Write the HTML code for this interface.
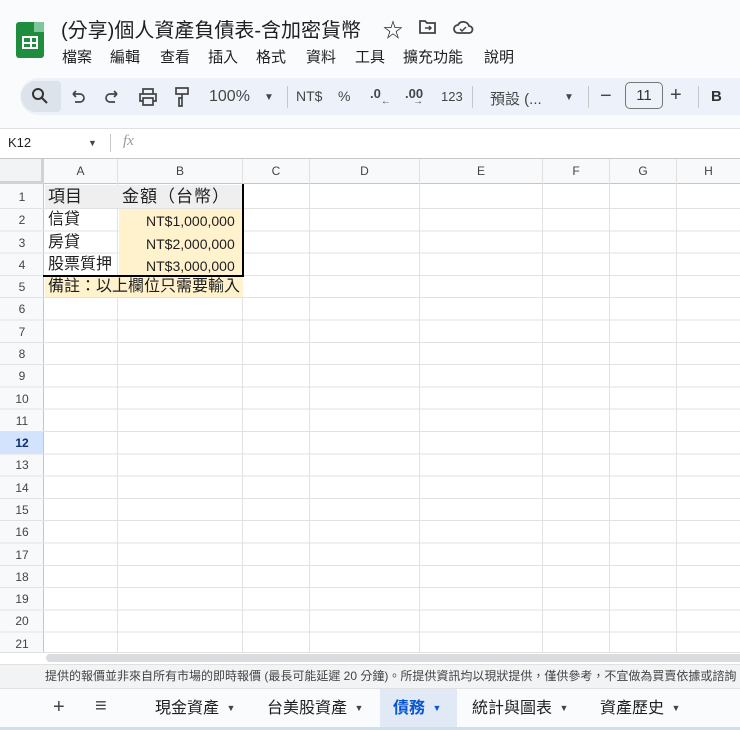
<!DOCTYPE html>
<html><head><meta charset="utf-8">
<style>
*{margin:0;padding:0;box-sizing:border-box}
body{width:740px;height:730px;overflow:hidden;background:#f9fbfd;font-family:"Liberation Sans","Noto Sans CJK TC",sans-serif;position:relative;color:#1f1f1f}
.a{position:absolute}
.menu span{position:absolute;top:0;white-space:nowrap}
.tb{position:absolute;top:78px;height:37px;left:20px;right:0;background:#edf2fa;border-radius:20px 0 0 20px}
.ti{position:absolute;top:87px;font-size:15px;color:#444746}
.sep{position:absolute;top:86px;width:1px;height:22px;background:#c7c7c7}
.rn{position:absolute;left:0;width:44px;text-align:center;font-size:12px;color:#444;}
.ch{position:absolute;top:159px;height:25px;line-height:25px;text-align:center;font-size:12px;color:#444;border-right:1px solid #e1e1e1}
.c{position:absolute;font-size:15px;line-height:22px;white-space:nowrap}
.ar{font-size:9px;margin-left:3px;color:#444;position:relative;top:-2px}
.tab{position:absolute;top:698px;font-size:16px;line-height:22px}
</style></head><body>
<div class="a" style="left:16px;top:22px;width:28px;height:36px;background:#1e8e3e;border-radius:3px"></div>
<div class="a" style="left:34px;top:22px;width:10px;height:10px;background:#7dc79a"></div>
<div class="a" style="left:22px;top:36px;width:16px;height:13px;border:2px solid #fff;background:linear-gradient(#fff,#fff) 6px 0/2px 100% no-repeat,linear-gradient(#fff,#fff) 0 4px/100% 2px no-repeat"></div>
<div class="a" style="left:61px;top:14px;font-size:20px;color:#1f1f1f">(分享)個人資產負債表-含加密貨幣</div>
<div class="a" style="left:383px;top:14px;font-size:20px">☆</div>
<svg class="a" style="left:418px;top:18px" width="20" height="18" viewBox="0 0 20 18"><path d="M2 3h5l2 2h8v10H2z" fill="none" stroke="#444" stroke-width="1.8"/><path d="M7 10h6M11 8l2 2-2 2" fill="none" stroke="#444" stroke-width="1.5"/></svg>
<svg class="a" style="left:452px;top:18px" width="22" height="18" viewBox="0 0 22 18"><path d="M6 15a4 4 0 0 1 0-8 6 6 0 0 1 11 1 3.5 3.5 0 0 1 0 7z" fill="none" stroke="#444" stroke-width="1.8"/><path d="M8 11l2 2 4-4" fill="none" stroke="#444" stroke-width="1.5"/></svg>
<div class="a menu" style="left:0;top:46px;font-size:15px;color:#1f1f1f"><span style="left:62px">檔案</span><span style="left:110px">編輯</span><span style="left:160px">查看</span><span style="left:208px">插入</span><span style="left:256px">格式</span><span style="left:306px">資料</span><span style="left:355px">工具</span><span style="left:403px">擴充功能</span><span style="left:484px">說明</span></div>
<div class="tb"></div>
<div class="a" style="left:21px;top:81px;width:40px;height:31px;background:#dde3ea;border-radius:16px 4px 4px 16px"></div>
<svg class="a" style="left:31px;top:87px" width="18" height="18" viewBox="0 0 18 18"><circle cx="7" cy="7" r="5" fill="none" stroke="#333" stroke-width="2"/><path d="M11 11l5 5" stroke="#333" stroke-width="2"/></svg>
<svg class="a" style="left:70px;top:89px" width="16" height="16" viewBox="0 0 16 16"><path d="M3 5h7a4 4 0 0 1 0 8H5M3 5l3-3M3 5l3 3" fill="none" stroke="#444" stroke-width="1.7"/></svg>
<svg class="a" style="left:104px;top:89px" width="16" height="16" viewBox="0 0 16 16"><path d="M13 5H6a4 4 0 0 0 0 8h5M13 5l-3-3M13 5l-3 3" fill="none" stroke="#444" stroke-width="1.7"/></svg>
<svg class="a" style="left:138px;top:87px" width="20" height="20" viewBox="0 0 20 20"><path d="M5 7V2h10v5M5 14H2V7h16v7h-3M5 11h10v7H5z" fill="none" stroke="#444" stroke-width="1.7"/></svg>
<svg class="a" style="left:173px;top:86px" width="18" height="22" viewBox="0 0 18 22"><path d="M3 2h12v6H3zM9 8v4H6v8h3v-8" fill="none" stroke="#444" stroke-width="1.7"/></svg>
<div class="ti" style="left:209px;font-size:16px;top:88px">100%</div>
<div class="ti" style="left:264px;font-size:10px;top:92px">▼</div>
<div class="sep" style="left:287px"></div>
<div class="ti" style="left:296px;font-size:14px;top:88px">NT$</div>
<div class="ti" style="left:338px;font-size:14px;top:88px">%</div>
<div class="ti" style="left:370px;font-size:13px;top:86px;font-weight:bold">.0<span style="font-size:10px;position:relative;top:6px">←</span></div>
<div class="ti" style="left:405px;font-size:13px;top:86px;font-weight:bold">.00<span style="font-size:10px;position:relative;top:6px;margin-left:-10px">→</span></div>
<div class="ti" style="left:441px;font-size:13px;top:89px">123</div>
<div class="sep" style="left:472px"></div>
<div class="ti" style="left:490px;top:88px">預設 (...</div>
<div class="ti" style="left:564px;font-size:10px;top:92px">▼</div>
<div class="sep" style="left:588px"></div>
<div class="ti" style="left:600px;top:85px;font-size:20px">−</div>
<div class="a" style="left:625px;top:82px;width:38px;height:27px;border:1px solid #747775;border-radius:5px;text-align:center;line-height:25px;font-size:15px;color:#333">11</div>
<div class="ti" style="left:670px;top:84px;font-size:20px">+</div>
<div class="sep" style="left:698px"></div>
<div class="ti" style="left:711px;top:88px;font-weight:bold;font-size:15px;color:#333">B</div>
<div class="a" style="left:0;top:128px;width:740px;height:30px;background:#fff;border-top:1px solid #e1e1e1"></div>
<div class="a" style="left:8px;top:135px;font-size:13px">K12</div>
<div class="a" style="left:88px;top:138px;font-size:9px;color:#444">▼</div>
<div class="a" style="left:110px;top:134px;width:1px;height:18px;background:#c7c7c7"></div>
<div class="a" style="left:123px;top:133px;font-size:15px;font-style:italic;color:#999;font-family:'Liberation Serif',serif">fx</div>
<div class="a" style="left:0;top:158px;width:740px;height:497px;background:#fff;border-top:1px solid #c7c7c7"></div>
<div class="a" style="left:0;top:159px;width:740px;height:25px;background:#f8f9fa;border-bottom:1px solid #c4c7c5"></div>
<div class="a" style="left:0;top:159px;width:44px;height:496px;background:#f8f9fa;border-right:1px solid #c4c7c5"></div>
<div class="a" style="left:0;top:159px;width:44px;height:25px;background:#f1f3f4;border-right:3px solid #d0d3d6;border-bottom:3px solid #d0d3d6"></div>
<div class="a" style="left:44px;top:184px;width:696px;height:471px;background-image:linear-gradient(to right,transparent 73px,#e2e2e3 73px,#e2e2e3 74px,transparent 74px,transparent 198px,#e2e2e3 198px,#e2e2e3 199px,transparent 199px,transparent 265px,#e2e2e3 265px,#e2e2e3 266px,transparent 266px,transparent 375px,#e2e2e3 375px,#e2e2e3 376px,transparent 376px,transparent 498px,#e2e2e3 498px,#e2e2e3 499px,transparent 499px,transparent 565px,#e2e2e3 565px,#e2e2e3 566px,transparent 566px,transparent 632px,#e2e2e3 632px,#e2e2e3 633px,transparent 633px)"></div>
<div class="a" style="left:0;top:208px;width:740px;height:447px;background-image:repeating-linear-gradient(to bottom,#e2e2e3 0,#e2e2e3 1px,transparent 1px,transparent 22.3px)"></div>
<div class="ch" style="left:44px;width:74px">A</div>
<div class="ch" style="left:118px;width:125px">B</div>
<div class="ch" style="left:243px;width:67px">C</div>
<div class="ch" style="left:310px;width:110px">D</div>
<div class="ch" style="left:420px;width:123px">E</div>
<div class="ch" style="left:543px;width:67px">F</div>
<div class="ch" style="left:610px;width:67px">G</div>
<div class="ch" style="left:677px;width:63px;border:0">H</div>
<div class="a" style="left:45px;top:185px;width:198px;height:23px;background:#efefef"></div>
<div class="a" style="left:119px;top:209px;width:124px;height:66px;background:#fff2cc"></div>
<div class="a" style="left:45px;top:276px;width:198px;height:21px;background:#fff2cc"></div>
<div class="a" style="left:43px;top:184px;width:201px;height:93px;border-right:2px solid #000;border-bottom:2px solid #000"></div>
<div class="c" style="left:48px;top:186px;font-size:17px">項目</div>
<div class="c" style="left:122px;top:186px;font-size:17px;letter-spacing:1px">金額（台幣）</div>
<div class="c" style="left:48px;top:209px;font-size:16px">信貸</div>
<div class="c" style="left:48px;top:232px;font-size:16px">房貸</div>
<div class="c" style="left:48px;top:254px;font-size:16px">股票質押</div>
<div class="c" style="left:146px;top:210px;font-size:14px">NT$1,000,000</div>
<div class="c" style="left:146px;top:233px;font-size:14px">NT$2,000,000</div>
<div class="c" style="left:146px;top:255px;font-size:14px">NT$3,000,000</div>
<div class="c" style="left:48px;top:276px;font-size:16px">備註：以上欄位只需要輸入</div>
<div class="rn" style="top:190px">1</div>
<div class="rn" style="top:213px">2</div>
<div class="rn" style="top:236px">3</div>
<div class="rn" style="top:258px">4</div>
<div class="rn" style="top:280px">5</div>
<div class="rn" style="top:302px">6</div>
<div class="rn" style="top:325px">7</div>
<div class="rn" style="top:347px">8</div>
<div class="rn" style="top:369px">9</div>
<div class="rn" style="top:392px">10</div>
<div class="rn" style="top:414px">11</div>
<div class="a" style="left:0;top:432px;width:43px;height:22px;background:#d3e3fd"></div>
<div class="rn" style="top:436px;font-weight:bold;color:#0b2e6e">12</div>
<div class="rn" style="top:458px">13</div>
<div class="rn" style="top:481px">14</div>
<div class="rn" style="top:503px">15</div>
<div class="rn" style="top:525px">16</div>
<div class="rn" style="top:548px">17</div>
<div class="rn" style="top:570px">18</div>
<div class="rn" style="top:592px">19</div>
<div class="rn" style="top:614px">20</div>
<div class="rn" style="top:637px">21</div>
<div class="a" style="left:0;top:652px;width:740px;height:12px;background:#fff;border-top:1px solid #e1e1e1"></div>
<div class="a" style="left:46px;top:654px;width:694px;height:8px;background:#dadce0;border-radius:4px 0 0 4px"></div>
<div class="a" style="left:0;top:664px;width:740px;height:24px;background:#f1f3f4;border-top:1px solid #e1e1e1;font-size:12px;line-height:23px;padding-left:45px;color:#444;white-space:nowrap;overflow:hidden">提供的報價並非來自所有市場的即時報價 (最長可能延遲 20 分鐘)。所提供資訊均以現狀提供，僅供參考，不宜做為買賣依據或諮詢</div>
<div class="a" style="left:0;top:688px;width:740px;height:42px;background:#f9fbfd;border-top:1px solid #e1e1e1"></div>
<div class="a" style="left:380px;top:689px;width:77px;height:38px;background:#e1e9f7"></div>
<div class="a" style="left:0;top:727px;width:740px;height:3px;background:#cfe0e8"></div>
<div class="a" style="left:53px;top:696px;font-size:20px;color:#444">+</div>
<div class="a" style="left:95px;top:695px;font-size:20px;color:#444">≡</div>
<div class="tab" style="left:155px">現金資產 <span class="ar">▼</span></div>
<div class="tab" style="left:267px">台美股資產 <span class="ar">▼</span></div>
<div class="tab" style="left:393px;color:#0b57d0;font-weight:bold">債務 <span class="ar" style="color:#0b57d0">▼</span></div>
<div class="tab" style="left:472px">統計與圖表 <span class="ar">▼</span></div>
<div class="tab" style="left:600px">資產歷史 <span class="ar">▼</span></div>
</body></html>
